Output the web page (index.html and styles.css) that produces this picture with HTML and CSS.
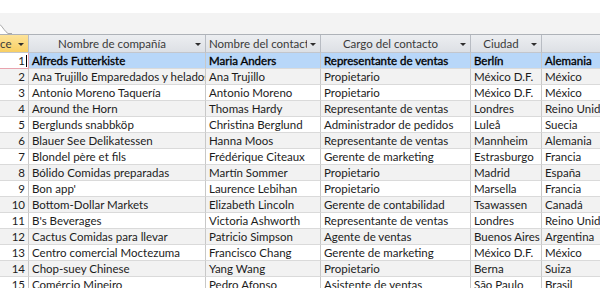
FILE: index.html
```html
<!DOCTYPE html>
<html lang="es">
<head>
<meta charset="utf-8">
<title>Clientes</title>
<link rel="stylesheet" href="styles.css">
</head>
<body>
<div class="top"></div>
<div class="tabstrip">
  <svg class="tab" width="12" height="21" viewBox="0 0 12 21">
    <path d="M0 12 C3 15 5 19 8 21 L0 21 Z" fill="#fff"/>
    <path d="M0 11.5 C3 14.5 5 18.5 8 20.5 L12 20.5" fill="none" stroke="#a9a9a9" stroke-width="1"/>
  </svg>
</div>
<div class="sheet">
  <div class="row head">
    <div class="hcell cur"><span class="lbl left">ce</span><span class="arrow"></span></div>
    <div class="hcell"><span class="lbl">Nombre de compañía</span><span class="arrow"></span></div>
    <div class="hcell"><span class="lbl">Nombre del contacto</span><span class="arrow"></span></div>
    <div class="hcell"><span class="lbl">Cargo del contacto</span><span class="arrow"></span></div>
    <div class="hcell"><span class="lbl">Ciudad</span><span class="arrow"></span></div>
    <div class="hcell"><span class="lbl">País</span><span class="arrow"></span></div>
  </div>
  <div class="row sel">
    <div class="cell id active">1<span class="caret"></span></div>
    <div class="cell">Alfreds Futterkiste</div>
    <div class="cell">Maria Anders</div>
    <div class="cell">Representante de ventas</div>
    <div class="cell">Berlín</div>
    <div class="cell">Alemania</div>
  </div>
  <div class="row alt">
    <div class="cell id">2</div>
    <div class="cell">Ana Trujillo Emparedados y helados</div>
    <div class="cell">Ana Trujillo</div>
    <div class="cell">Propietario</div>
    <div class="cell">México D.F.</div>
    <div class="cell">México</div>
  </div>
  <div class="row">
    <div class="cell id">3</div>
    <div class="cell">Antonio Moreno Taquería</div>
    <div class="cell">Antonio Moreno</div>
    <div class="cell">Propietario</div>
    <div class="cell">México D.F.</div>
    <div class="cell">México</div>
  </div>
  <div class="row alt">
    <div class="cell id">4</div>
    <div class="cell">Around the Horn</div>
    <div class="cell">Thomas Hardy</div>
    <div class="cell">Representante de ventas</div>
    <div class="cell">Londres</div>
    <div class="cell">Reino Unido</div>
  </div>
  <div class="row">
    <div class="cell id">5</div>
    <div class="cell">Berglunds snabbköp</div>
    <div class="cell">Christina Berglund</div>
    <div class="cell">Administrador de pedidos</div>
    <div class="cell">Luleå</div>
    <div class="cell">Suecia</div>
  </div>
  <div class="row alt">
    <div class="cell id">6</div>
    <div class="cell">Blauer See Delikatessen</div>
    <div class="cell">Hanna Moos</div>
    <div class="cell">Representante de ventas</div>
    <div class="cell">Mannheim</div>
    <div class="cell">Alemania</div>
  </div>
  <div class="row">
    <div class="cell id">7</div>
    <div class="cell">Blondel père et fils</div>
    <div class="cell">Frédérique Citeaux</div>
    <div class="cell">Gerente de marketing</div>
    <div class="cell">Estrasburgo</div>
    <div class="cell">Francia</div>
  </div>
  <div class="row alt">
    <div class="cell id">8</div>
    <div class="cell">Bólido Comidas preparadas</div>
    <div class="cell">Martín Sommer</div>
    <div class="cell">Propietario</div>
    <div class="cell">Madrid</div>
    <div class="cell">España</div>
  </div>
  <div class="row">
    <div class="cell id">9</div>
    <div class="cell">Bon app'</div>
    <div class="cell">Laurence Lebihan</div>
    <div class="cell">Propietario</div>
    <div class="cell">Marsella</div>
    <div class="cell">Francia</div>
  </div>
  <div class="row alt">
    <div class="cell id">10</div>
    <div class="cell">Bottom-Dollar Markets</div>
    <div class="cell">Elizabeth Lincoln</div>
    <div class="cell">Gerente de contabilidad</div>
    <div class="cell">Tsawassen</div>
    <div class="cell">Canadá</div>
  </div>
  <div class="row">
    <div class="cell id">11</div>
    <div class="cell">B's Beverages</div>
    <div class="cell">Victoria Ashworth</div>
    <div class="cell">Representante de ventas</div>
    <div class="cell">Londres</div>
    <div class="cell">Reino Unido</div>
  </div>
  <div class="row alt">
    <div class="cell id">12</div>
    <div class="cell">Cactus Comidas para llevar</div>
    <div class="cell">Patricio Simpson</div>
    <div class="cell">Agente de ventas</div>
    <div class="cell">Buenos Aires</div>
    <div class="cell">Argentina</div>
  </div>
  <div class="row">
    <div class="cell id">13</div>
    <div class="cell">Centro comercial Moctezuma</div>
    <div class="cell">Francisco Chang</div>
    <div class="cell">Gerente de marketing</div>
    <div class="cell">México D.F.</div>
    <div class="cell">México</div>
  </div>
  <div class="row alt">
    <div class="cell id">14</div>
    <div class="cell">Chop-suey Chinese</div>
    <div class="cell">Yang Wang</div>
    <div class="cell">Propietario</div>
    <div class="cell">Berna</div>
    <div class="cell">Suiza</div>
  </div>
  <div class="row">
    <div class="cell id">15</div>
    <div class="cell">Comércio Mineiro</div>
    <div class="cell">Pedro Afonso</div>
    <div class="cell">Asistente de ventas</div>
    <div class="cell">São Paulo</div>
    <div class="cell">Brasil</div>
  </div>
</div>
</body>
</html>
```
FILE: styles.css
```css
html, body {
  margin: 0;
  padding: 0;
  background: #fff;
  width: 600px;
  height: 288px;
  overflow: hidden;
}
body {
  font-family: Lato, "Liberation Sans", sans-serif;
  font-size: 11.5px;
  color: #1c1c1c;
}
.top {
  height: 13px;
}
.tabstrip {
  position: relative;
  height: 21px;
  background: #f3f3f3;
}
.tab {
  position: absolute;
  left: 0;
  top: 0;
}
.sheet {
  width: 700px;
}
.row {
  display: grid;
  grid-template-columns: 29px 177px 115px 150px 71px 158px;
  height: 16px;
}
.row.head {
  height: 18px;
  border-top: 1px solid #aeb2b8;
}
.hcell {
  display: flex;
  align-items: center;
  box-sizing: border-box;
  background: linear-gradient(#eceef1, #dde0e5);
  border-right: 1px solid #b8bcc3;
  border-bottom: 1px solid #c3c6cc;
  color: #3a3a3a;
  overflow: hidden;
}
.hcell.cur {
  background: linear-gradient(#fde39a, #f8cf63);
}
.lbl {
  flex: 1;
  min-width: 0;
  text-align: center;
  white-space: nowrap;
  overflow: hidden;
  padding-left: 3px;
}
.lbl.left {
  text-align: left;
  padding-left: 0;
}
.arrow {
  flex: none;
  width: 0;
  height: 0;
  border-left: 3px solid transparent;
  border-right: 3px solid transparent;
  border-top: 3px solid #2e2e2e;
  margin: 1px 4px 0 3px;
}
.cell {
  box-sizing: border-box;
  border-right: 1px solid #c8c8c8;
  border-bottom: 1px solid #dadada;
  padding: 0 3px;
  line-height: 15px;
  white-space: nowrap;
  overflow: hidden;
  background: #fff;
}
.cell.id {
  text-align: right;
}
.row.alt .cell {
  background: #f2f2f2;
}
.row.sel .cell {
  background: #b8d7f9;
  color: #000;
  -webkit-text-stroke: 0.35px #000;
}
.row.sel .cell.active {
  background: #fff;
  color: #1c1c1c;
  -webkit-text-stroke: 0;
  border-right-color: #e9a3ae;
  border-bottom-color: #e9a3ae;
}
.caret {
  display: inline-block;
  width: 1px;
  height: 12px;
  background: #000;
  vertical-align: -2px;
  margin-left: 1px;
  margin-right: -2px;
}
```
